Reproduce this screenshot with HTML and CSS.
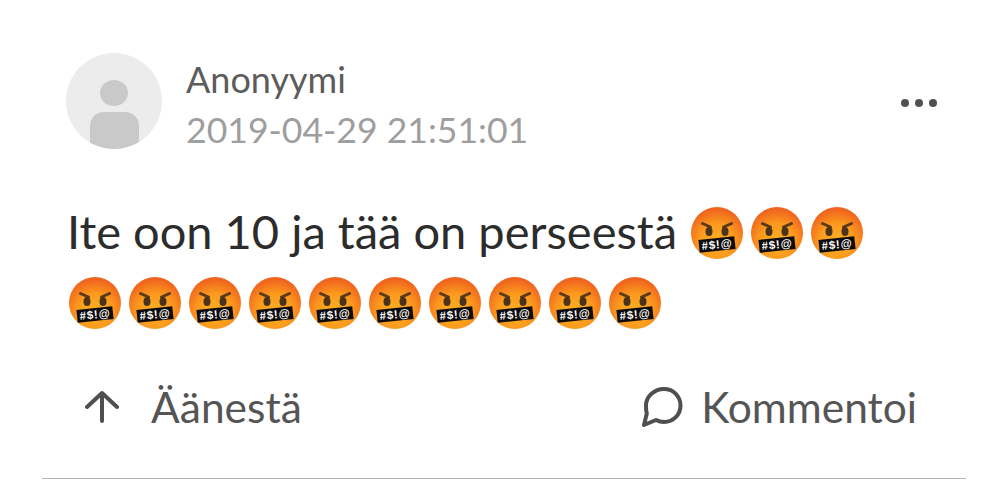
FILE: index.html
```html
<!DOCTYPE html>
<html lang="fi">
<head>
  <meta charset="UTF-8">
  <meta name="viewport" content="width=device-width, initial-scale=1.0">
  <title>Anonyymi</title>
  <link rel="stylesheet" href="styles.css">
</head>
<body>
  <svg class="defs" width="0" height="0" aria-hidden="true">
    <defs>
      <radialGradient id="rageFace" cx="50%" cy="66%" r="62%">
        <stop offset="0" stop-color="#fdb022"/>
        <stop offset="0.55" stop-color="#fb9a1e"/>
        <stop offset="1" stop-color="#f0641e"/>
      </radialGradient>
      <symbol id="rage" viewBox="0 0 54 54">
        <circle cx="27" cy="26" r="26" fill="url(#rageFace)"/>
        <path d="M12.500 16.500l8 3.500M41.500 16.500l-8 3.500" stroke="#5a3a18" stroke-width="3" stroke-linecap="round"/>
        <ellipse cx="19" cy="24.500" rx="3.500" ry="4.500" fill="#4a3318"/>
        <ellipse cx="35" cy="24.500" rx="3.500" ry="4.500" fill="#4a3318"/>
        <g transform="rotate(-6 27 37.500)">
          <rect x="9" y="31" width="36" height="13" fill="#0d0b0b"/>
          <text x="27" y="41.500" class="swear">#$!@</text>
        </g>
      </symbol>
    </defs>
  </svg>

  <article class="post">
    <header class="post-head">
      <div class="avatar">
        <span class="avatar-head"></span>
        <span class="avatar-body"></span>
      </div>
      <div class="meta">
        <div class="author">Anonyymi</div>
        <div class="date">2019-04-29 21:51:01</div>
      </div>
      <div class="more"><span></span><span></span><span></span></div>
    </header>

    <p class="message">Ite oon 10 ja tää on perseestä <svg class="emoji"><use href="#rage"/></svg><svg class="emoji"><use href="#rage"/></svg><svg class="emoji"><use href="#rage"/></svg><wbr><svg class="emoji"><use href="#rage"/></svg><svg class="emoji"><use href="#rage"/></svg><svg class="emoji"><use href="#rage"/></svg><svg class="emoji"><use href="#rage"/></svg><svg class="emoji"><use href="#rage"/></svg><svg class="emoji"><use href="#rage"/></svg><svg class="emoji"><use href="#rage"/></svg><svg class="emoji"><use href="#rage"/></svg><svg class="emoji"><use href="#rage"/></svg><svg class="emoji"><use href="#rage"/></svg></p>

    <footer class="actions">
      <div class="action">
        <svg class="icon-up" viewBox="0 0 34 34" fill="none" stroke="#4f4f4f" stroke-width="4" stroke-linecap="round" stroke-linejoin="round">
          <path d="M17 31V3M2 17L17 3l15 14"/>
        </svg>
        <span>Äänestä</span>
      </div>
      <div class="action">
        <svg class="icon-comment" viewBox="0 0 42 42" fill="none" stroke="#4f4f4f" stroke-width="4" stroke-linejoin="round">
          <path d="M23 3c9.400 0 16.500 7.300 16.500 16.500S32.400 36 23 36c-3 0-5.500-.7-8-2L3 39l2.800-11.500C5 25 5 22.500 5 19.500 5 10.300 13.600 3 23 3z"/>
        </svg>
        <span>Kommentoi</span>
      </div>
    </footer>
  </article>
</body>
</html>
```

FILE: styles.css
```css
body {
  margin: 0;
  background: #fff;
  font-family: Lato, "Open Sans", sans-serif;
}

.defs {
  position: absolute;
}

.swear {
  font-family: "Liberation Sans", sans-serif;
  font-size: 11.500px;
  font-weight: bold;
  letter-spacing: 0.8px;
  fill: #fff;
  text-anchor: middle;
}

.post {
  margin: 0 35px 0 42px;
  height: 479px;
  box-sizing: border-box;
  padding-top: 53px;
  border-bottom: 1px solid #b4b4b4;
}

.post-head {
  display: flex;
  align-items: flex-start;
  padding: 0 29px 0 24px;
}

.avatar {
  width: 96px;
  height: 96px;
  border-radius: 50%;
  background: #ececec;
  display: flex;
  flex-direction: column;
  align-items: center;
  overflow: hidden;
  flex-shrink: 0;
}

.avatar-head {
  width: 28px;
  height: 28px;
  margin-top: 27px;
  border-radius: 50%;
  background: #c9c9c9;
}

.avatar-body {
  width: 49px;
  height: 40px;
  margin-top: 6px;
  border-radius: 14px 14px 0 0;
  background: #c9c9c9;
}

.meta {
  margin-left: 24px;
  flex: 1;
}

.author {
  font-size: 36px;
  line-height: 52px;
  color: #5c5c5c;
}

.date {
  font-size: 35.600px;
  line-height: 50px;
  color: #9e9e9e;
}

.more {
  display: flex;
  gap: 6px;
  margin-top: 46px;
  margin-left: -1px;
}

.more span {
  width: 8px;
  height: 8px;
  border-radius: 50%;
  background: #505050;
}

.message {
  margin: 41px 60px 0 25px;
  font-size: 47px;
  line-height: 70px;
  color: #2c2c2c;
}

.emoji {
  width: 54px;
  height: 54px;
  margin: 0 5px 0 1px;
  vertical-align: -12px;
}

.actions {
  display: flex;
  justify-content: space-between;
  margin-top: 46px;
  padding: 0 49px 0 43px;
}

.action {
  display: flex;
  align-items: center;
  font-size: 42.500px;
  line-height: 50px;
  color: #555;
}

.icon-up {
  width: 34px;
  height: 34px;
  margin-right: 32px;
}

.icon-comment {
  width: 42px;
  height: 42px;
  margin-right: 18px;
}
```
